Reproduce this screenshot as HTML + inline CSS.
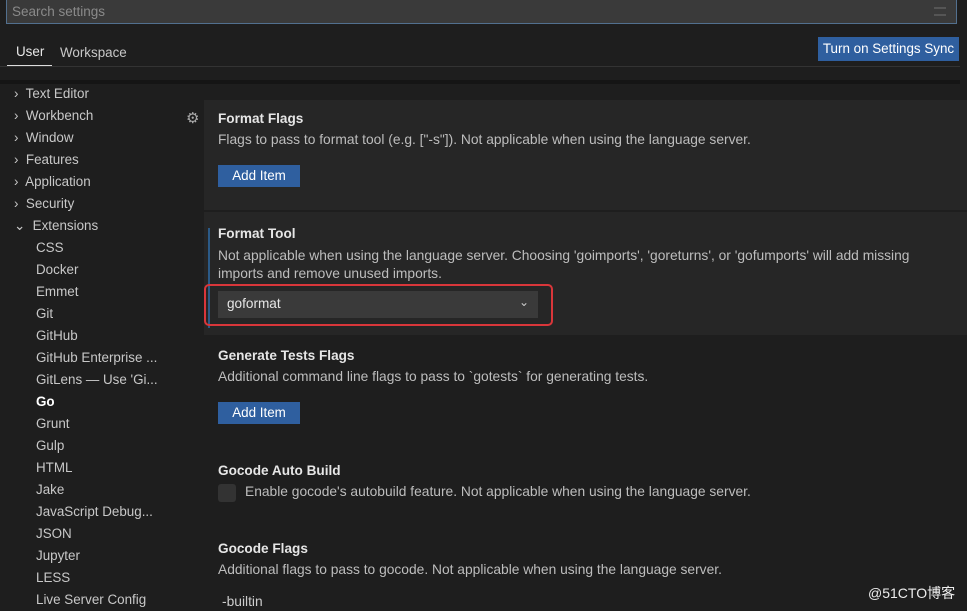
<!DOCTYPE html>
<html><head><meta charset="utf-8"><style>
body{margin:0;width:967px;height:610px;background:#1e1e1e;font-family:"Liberation Sans",sans-serif;color:#ccc;position:relative;overflow:hidden;font-size:13px}
.a{position:absolute;white-space:nowrap}
.search{left:6px;top:-2px;width:949px;height:24px;background:#3a3a3a;border:1px solid #52708f;}
.side{font-size:13.4px;color:#c8c8c8}
.h{font-weight:bold;color:#e6e6e6;font-size:13.6px}
.d{color:#bdbdbd;font-size:13.8px}
.btn{background:#2f5f9f;color:#fff;font-size:13.4px;text-align:center;line-height:22px;height:22px}
</style></head><body>
<div class="a search"><span style="position:absolute;left:5px;top:5px;color:#8a8a8a;font-size:13.5px">Search settings</span>
<div style="position:absolute;right:10px;top:8px;width:12px;height:9px;border-top:2px solid #555;border-bottom:2px solid #555;box-sizing:border-box"></div></div>
<div class="a" style="left:16px;top:44px;color:#e8e8e8;font-size:13.4px">User</div>
<div class="a" style="left:60px;top:45px;color:#c8c8c8;font-size:13.4px">Workspace</div>
<div class="a" style="left:7px;top:65px;width:45px;height:2px;background:#ddd"></div>
<div class="a" style="left:0;top:66px;width:960px;height:1px;background:#333"></div>
<div class="a" style="left:0;top:80px;width:960px;height:4px;background:#151515"></div>
<div class="a btn" style="left:818px;top:37px;width:141px;height:24px;line-height:24px">Turn on Settings Sync</div>
<div class="a side" style="left:14px;top:83px;line-height:22px">
<div>›&nbsp; Text Editor</div><div>›&nbsp; Workbench</div><div>›&nbsp; Window</div><div>›&nbsp; Features</div><div>›&nbsp; Application</div><div>›&nbsp; Security</div><div>⌄&nbsp; Extensions</div>
<div style="padding-left:22px">CSS<br>Docker<br>Emmet<br>Git<br>GitHub<br>GitHub Enterprise ...<br>GitLens — Use 'Gi...<br><b style="color:#fff">Go</b><br>Grunt<br>Gulp<br>HTML<br>Jake<br>JavaScript Debug...<br>JSON<br>Jupyter<br>LESS<br>Live Server Config</div></div>
<div class="a" style="left:186px;top:109px;color:#aaa;font-size:15px">⚙</div>
<div class="a" style="left:204px;top:100px;width:763px;height:110px;background:#262626"></div>
<div class="a" style="left:204px;top:212px;width:763px;height:123px;background:#262626"></div>
<div class="a" style="left:208px;top:228px;width:2px;height:100px;background:#2b5a87"></div>
<div class="a h" style="left:218px;top:111px">Format Flags</div>
<div class="a d" style="left:218px;top:132px">Flags to pass to format tool (e.g. ["-s"]). Not applicable when using the language server.</div>
<div class="a btn" style="left:218px;top:165px;width:82px">Add Item</div>
<div class="a h" style="left:218px;top:226px">Format Tool</div>
<div class="a d" style="left:218px;top:247px;line-height:18px">Not applicable when using the language server. Choosing 'goimports', 'goreturns', or 'gofumports' will add missing<br>imports and remove unused imports.</div>
<div class="a" style="left:204px;top:284px;width:345px;height:38px;border:2px solid #d9363a;border-radius:5px"></div>
<div class="a" style="left:218px;top:291px;width:320px;height:27px;background:#3a3a3a"><span style="position:absolute;left:9px;top:5px;color:#e6e6e6;font-size:13.6px">goformat</span><span style="position:absolute;right:9px;top:4px;color:#ccc;font-size:12px">⌄</span></div>
<div class="a h" style="left:218px;top:348px">Generate Tests Flags</div>
<div class="a d" style="left:218px;top:369px">Additional command line flags to pass to `gotests` for generating tests.</div>
<div class="a btn" style="left:218px;top:402px;width:82px">Add Item</div>
<div class="a h" style="left:218px;top:463px">Gocode Auto Build</div>
<div class="a" style="left:218px;top:484px;width:18px;height:18px;background:#333;border-radius:3px"></div>
<div class="a d" style="left:245px;top:484px">Enable gocode's autobuild feature. Not applicable when using the language server.</div>
<div class="a h" style="left:218px;top:541px">Gocode Flags</div>
<div class="a d" style="left:218px;top:562px">Additional flags to pass to gocode. Not applicable when using the language server.</div>
<div class="a d" style="left:222px;top:594px;color:#ccc">-builtin</div>
<div class="a" style="left:868px;top:583px;color:#eee;font-family:'Liberation Sans','Noto Sans CJK SC',sans-serif;font-size:14px">@51CTO博客</div>
</body></html>
